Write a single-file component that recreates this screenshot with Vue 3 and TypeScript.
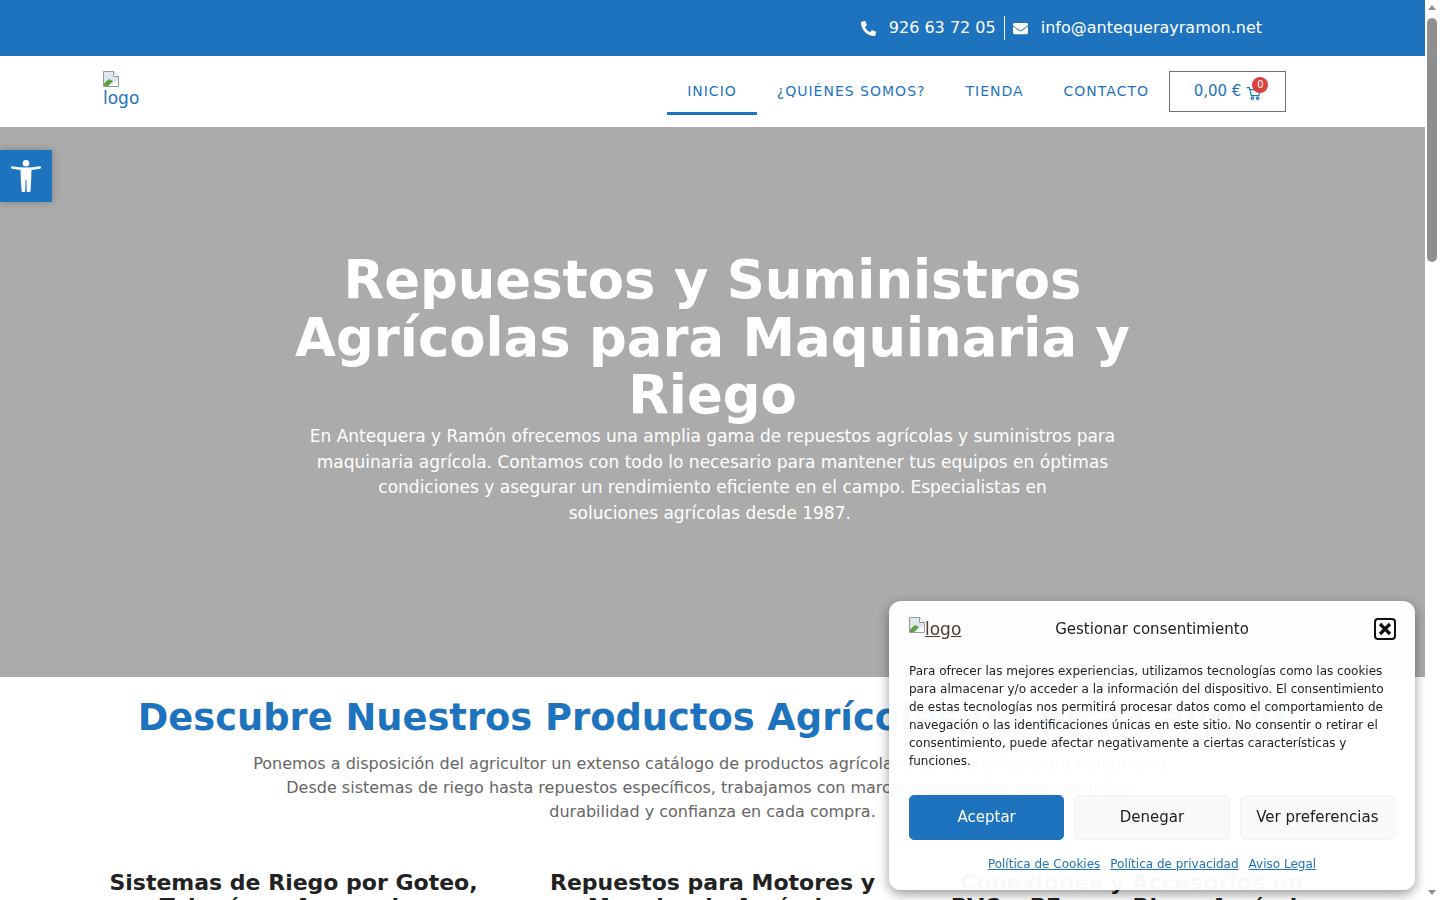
<template>
  <div class="page">
    <div class="topbar">
      <a class="top-item">
        <svg class="top-icon" viewBox="0 0 512 512"><path d="M493.4 24.6l-104-24c-11.3-2.6-22.9 3.3-27.5 13.9l-48 112c-4.2 9.8-1.4 21.3 6.9 28l60.6 49.6c-36 76.7-98.9 140.500-177.200 177.200l-49.600-60.600c-6.800-8.300-18.200-11.100-28-6.900l-112 48C3.900 366.500-2 378.100.6 389.400l24 104C27.100 504.200 36.700 512 48 512c256.100 0 464-207.500 464-464 0-11.200-7.700-20.900-18.600-23.400z" transform="matrix(-1 0 0 1 512 0)"/></svg>
        <span>926 63 72 05</span>
      </a>
      <span class="top-sep"></span>
      <a class="top-item">
        <svg class="top-icon" viewBox="0 0 512 512"><path d="M502.300 190.800c3.900-3.100 9.700-.2 9.700 4.700V400c0 26.500-21.500 48-48 48H48c-26.500 0-48-21.500-48-48V195.600c0-5 5.700-7.800 9.700-4.700 22.400 17.400 52.100 39.500 154.100 113.600 21.100 15.400 56.700 47.800 92.200 47.600 35.700.3 72-32.800 92.300-47.600 102-74.100 131.600-96.300 154-113.700zM256 320c23.200.4 56.600-29.200 73.400-41.400 132.700-96.300 142.800-104.700 173.400-128.700 5.800-4.500 9.200-11.500 9.200-18.900v-19c0-26.500-21.500-48-48-48H48C21.500 64 0 85.500 0 112v19c0 7.400 3.400 14.300 9.200 18.900 30.600 23.900 40.700 32.400 173.400 128.700 16.800 12.200 50.200 41.800 73.400 41.400z"/></svg>
        <span>info@antequerayramon.net</span>
      </a>
    </div>

    <header class="navbar">
      <a class="logo">
        <svg class="broken" viewBox="0 0 16 16"><path d="M.5.5h10l5 5v10H.5z" fill="#dfe6f3" stroke="#9a9a9a"/><path d="M10.500.5v5h5" fill="#fff" stroke="#9a9a9a"/><path d="M1 15v-2.500L6 8l4 2-5 5z" fill="#5ba33c"/><path d="M6 15l9-6v6z" fill="#fff"/></svg>
        <span>logo</span>
      </a>
      <nav class="menu">
        <a v-for="link in links" :key="link" class="menu-link" :class="{ active: link === 'INICIO' }">{{ link }}</a>
        <a class="cart">
          <span class="cart-total">0,00 €</span>
          <span class="cart-icon">
            <svg viewBox="0 0 24 24" fill="none" stroke="#1e73be" stroke-width="1.8"><path d="M1 4h4l3 12h11l3-9H6"/><circle cx="9.500" cy="20" r="1.800"/><circle cx="17.500" cy="20" r="1.800"/></svg>
            <span class="cart-badge">0</span>
          </span>
        </a>
      </nav>
    </header>

    <section class="hero">
      <h1>Repuestos y Suministros Agrícolas para Maquinaria y Riego</h1>
      <p>En Antequera y Ramón ofrecemos una amplia gama de repuestos agrícolas y suministros para maquinaria agrícola. Contamos con todo lo necesario para mantener tus equipos en óptimas condiciones y asegurar un rendimiento eficiente en el campo. Especialistas en<br>soluciones agrícolas desde 1987.&nbsp;</p>
    </section>

    <main class="products">
      <h2>Descubre Nuestros Productos Agrícolas de Alta Calidad</h2>
      <p class="intro">Ponemos a disposición del agricultor un extenso catálogo de productos agrícolas y componentes para maquinaria. Desde sistemas de riego hasta repuestos específicos, trabajamos con marcas reconocidas para garantizar durabilidad y confianza en cada compra.</p>
      <div class="columns">
        <h3 v-for="col in columns" :key="col">{{ col }}</h3>
      </div>
    </main>

    <button class="a11y" aria-label="Accesibilidad">
      <svg viewBox="0 0 32 32" fill="#fff"><circle cx="16" cy="3.200" r="3.300"/><path d="M2.200 7.500Q16 10 29.800 7.500" fill="none" stroke="#fff" stroke-width="2.400" stroke-linecap="round"/><path d="M10.500 8.500h11l-.3 11-.7 11a1.900 1.900 0 0 1-3.800 0l-.2-10.500h-1l-.2 10.500a1.900 1.900 0 0 1-3.800 0l-.7-11z"/></svg>
    </button>

    <aside class="consent">
      <div class="consent-head">
        <a class="consent-logo">
          <svg class="broken" viewBox="0 0 16 16"><path d="M.5.5h10l5 5v10H.5z" fill="#dfe6f3" stroke="#9a9a9a"/><path d="M10.500.5v5h5" fill="#fff" stroke="#9a9a9a"/><path d="M1 15v-2.500L6 8l4 2-5 5z" fill="#5ba33c"/><path d="M6 15l9-6v6z" fill="#fff"/></svg>
          <span>logo</span>
        </a>
        <div class="consent-title">Gestionar consentimiento</div>
        <svg class="consent-close" viewBox="0 0 22 22"><rect x="1" y="1" width="20" height="20" rx="3" fill="none" stroke="#111" stroke-width="2"/><path d="M6 6l10 10M16 6L6 16" stroke="#111" stroke-width="3.200" fill="none"/></svg>
      </div>
      <p class="consent-text">Para ofrecer las mejores experiencias, utilizamos tecnologías como las cookies para almacenar y/o acceder a la información del dispositivo. El consentimiento de estas tecnologías nos permitirá procesar datos como el comportamiento de navegación o las identificaciones únicas en este sitio. No consentir o retirar el consentimiento, puede afectar negativamente a ciertas características y funciones.</p>
      <div class="consent-buttons">
        <button class="btn primary">Aceptar</button>
        <button class="btn">Denegar</button>
        <button class="btn">Ver preferencias</button>
      </div>
      <div class="consent-links">
        <a>Política de Cookies</a>
        <a>Política de privacidad</a>
        <a>Aviso Legal</a>
      </div>
    </aside>

    <div class="scrollbar" aria-hidden="true">
      <span class="arrow up"></span>
      <span class="thumb"></span>
      <span class="arrow down"></span>
    </div>
  </div>
</template>

<script setup lang="ts">
const links: string[] = ['INICIO', '¿QUIÉNES SOMOS?', 'TIENDA', 'CONTACTO']

const columns: string[] = [
  'Sistemas de Riego por Goteo, Tuberías y Accesorios',
  'Repuestos para Motores y Maquinaria Agrícola',
  'Conexiones y Accesorios en PVC y PE para Riego Agrícola'
]
</script>

<style>
body {
  margin: 0;
  background: #fff;
}
</style>

<style scoped>
.page {
  font-family: "DejaVu Sans", sans-serif;
  width: 1425px;
  min-height: 3200px;
  color: #222;
}

.topbar {
  height: 56px;
  background: #1e73be;
  display: flex;
  align-items: center;
  justify-content: flex-end;
  padding-right: 163px;
  color: #fff;
  font-size: 16px;
}

.top-item {
  display: flex;
  align-items: center;
  gap: 13px;
  margin-top: -2px;
}

.top-icon {
  width: 15px;
  height: 15px;
  fill: #fff;
  margin-top: 2px;
}

.top-sep {
  width: 1px;
  height: 24px;
  background: #fff;
  margin: 0 8px;
}

.navbar {
  height: 71px;
  display: flex;
  align-items: center;
  justify-content: space-between;
  padding: 0 139px 0 103px;
  background: #fff;
}

.logo {
  width: 40px;
  color: #1e73be;
  font-size: 17px;
  line-height: 22px;
  margin-top: -4px;
}

.broken {
  display: block;
  width: 16px;
  height: 16px;
  flex: none;
}

.menu {
  display: flex;
  align-items: center;
}

.menu-link {
  padding: 3px 20px 0;
  height: 48px;
  margin-bottom: 1px;
  display: flex;
  align-items: center;
  color: #1e73be;
  font-size: 14px;
  letter-spacing: 1px;
  box-sizing: border-box;
  border-bottom: 3px solid transparent;
}

.menu-link.active {
  border-bottom-color: #1e73be;
}

.cart {
  display: flex;
  align-items: center;
  justify-content: center;
  gap: 5px;
  width: 117px;
  height: 41px;
  padding-left: 1px;
  box-sizing: border-box;
  border: 1px solid #69727d;
  color: #1e73be;
  font-size: 15px;
}

.cart-total {
  margin-top: -2px;
}

.cart-icon {
  position: relative;
  display: block;
  width: 16px;
  height: 16px;
  margin-top: 2px;
}

.cart-icon svg {
  display: block;
  width: 16px;
  height: 16px;
}

.cart-badge {
  position: absolute;
  top: -8px;
  right: -6px;
  width: 16px;
  height: 16px;
  border-radius: 50%;
  background: #d9423f;
  color: #fff;
  font-size: 10px;
  line-height: 16px;
  text-align: center;
}

.hero {
  height: 550px;
  box-sizing: border-box;
  background: #ababab;
  color: #fff;
  text-align: center;
  padding-top: 124px;
}

.hero h1 {
  width: 860px;
  margin: 0 auto;
  font-size: 52.800px;
  line-height: 57.500px;
  font-weight: 700;
}

.hero p {
  width: 820px;
  margin: 0.500px auto 0;
  font-size: 17px;
  line-height: 25.600px;
}

.products {
  padding: 19px 103px 0;
  text-align: center;
}

.products h2 {
  margin: 0;
  color: #1e73be;
  font-size: 36.800px;
  line-height: 43px;
  font-weight: 700;
}

.intro {
  width: 930px;
  margin: 13px auto 0;
  color: #666;
  font-size: 16px;
  line-height: 24px;
}

.columns {
  display: grid;
  grid-template-columns: repeat(3, 1fr);
  gap: 38px;
  margin-top: 47px;
}

.columns h3 {
  margin: 0;
  color: #222;
  font-size: 22px;
  line-height: 24px;
  font-weight: 700;
}

.a11y {
  position: fixed;
  top: 150px;
  left: 0;
  width: 52px;
  height: 52px;
  padding: 10px;
  border: 0;
  background: #1e73be;
  box-shadow: 0 0 8px rgba(0, 0, 0, 0.25);
}

.a11y svg {
  display: block;
  width: 32px;
  height: 32px;
}

.consent {
  position: fixed;
  left: 889px;
  top: 601px;
  width: 526px;
  height: 289px;
  box-sizing: border-box;
  padding: 20px;
  border-radius: 12px;
  background: rgba(255, 255, 255, 0.97);
  box-shadow: 0 4px 12px rgba(0, 0, 0, 0.4);
  color: #222;
}

.consent-head {
  position: relative;
  display: flex;
  align-items: center;
  justify-content: space-between;
  height: 26px;
  margin-top: -5px;
}

.consent-logo {
  display: flex;
  align-items: flex-start;
  color: #4a3a30;
  font-size: 17px;
  text-decoration: underline;
  line-height: 24px;
}

.consent-title {
  position: absolute;
  left: 0;
  right: 0;
  text-align: center;
  font-size: 15px;
}

.consent-close {
  width: 22px;
  height: 22px;
  margin-right: -1px;
}

.consent-text {
  margin: 20px 0 0;
  font-size: 12px;
  line-height: 18px;
}

.consent-buttons {
  display: grid;
  grid-template-columns: repeat(3, 1fr);
  gap: 10px;
  margin-top: 25px;
}

.btn {
  height: 45px;
  border: 1px solid #f2f2f2;
  border-radius: 5px;
  background: #f9f9f9;
  color: #222;
  font-family: inherit;
  font-size: 15px;
  padding: 0 0 2px;
}

.btn.primary {
  background: #1e73be;
  border-color: #1e73be;
  color: #fff;
}

.consent-links {
  display: flex;
  justify-content: center;
  gap: 10px;
  margin-top: 17px;
  font-size: 12px;
}

.consent-links a {
  color: #1e73be;
  text-decoration: underline;
}

.scrollbar {
  position: fixed;
  top: 0;
  right: 0;
  bottom: 0;
  width: 15px;
  background: #fff;
}

.thumb {
  position: absolute;
  top: 18px;
  left: 2px;
  width: 10px;
  height: 244px;
  border-radius: 5px;
  background: #8f8f8f;
}

.arrow {
  position: absolute;
  left: 3px;
  width: 0;
  height: 0;
  border-left: 4.500px solid transparent;
  border-right: 4.500px solid transparent;
}

.arrow.up {
  top: 5px;
  border-bottom: 5px solid #8f8f8f;
}

.arrow.down {
  bottom: 5px;
  border-top: 5px solid #8f8f8f;
}
</style>
